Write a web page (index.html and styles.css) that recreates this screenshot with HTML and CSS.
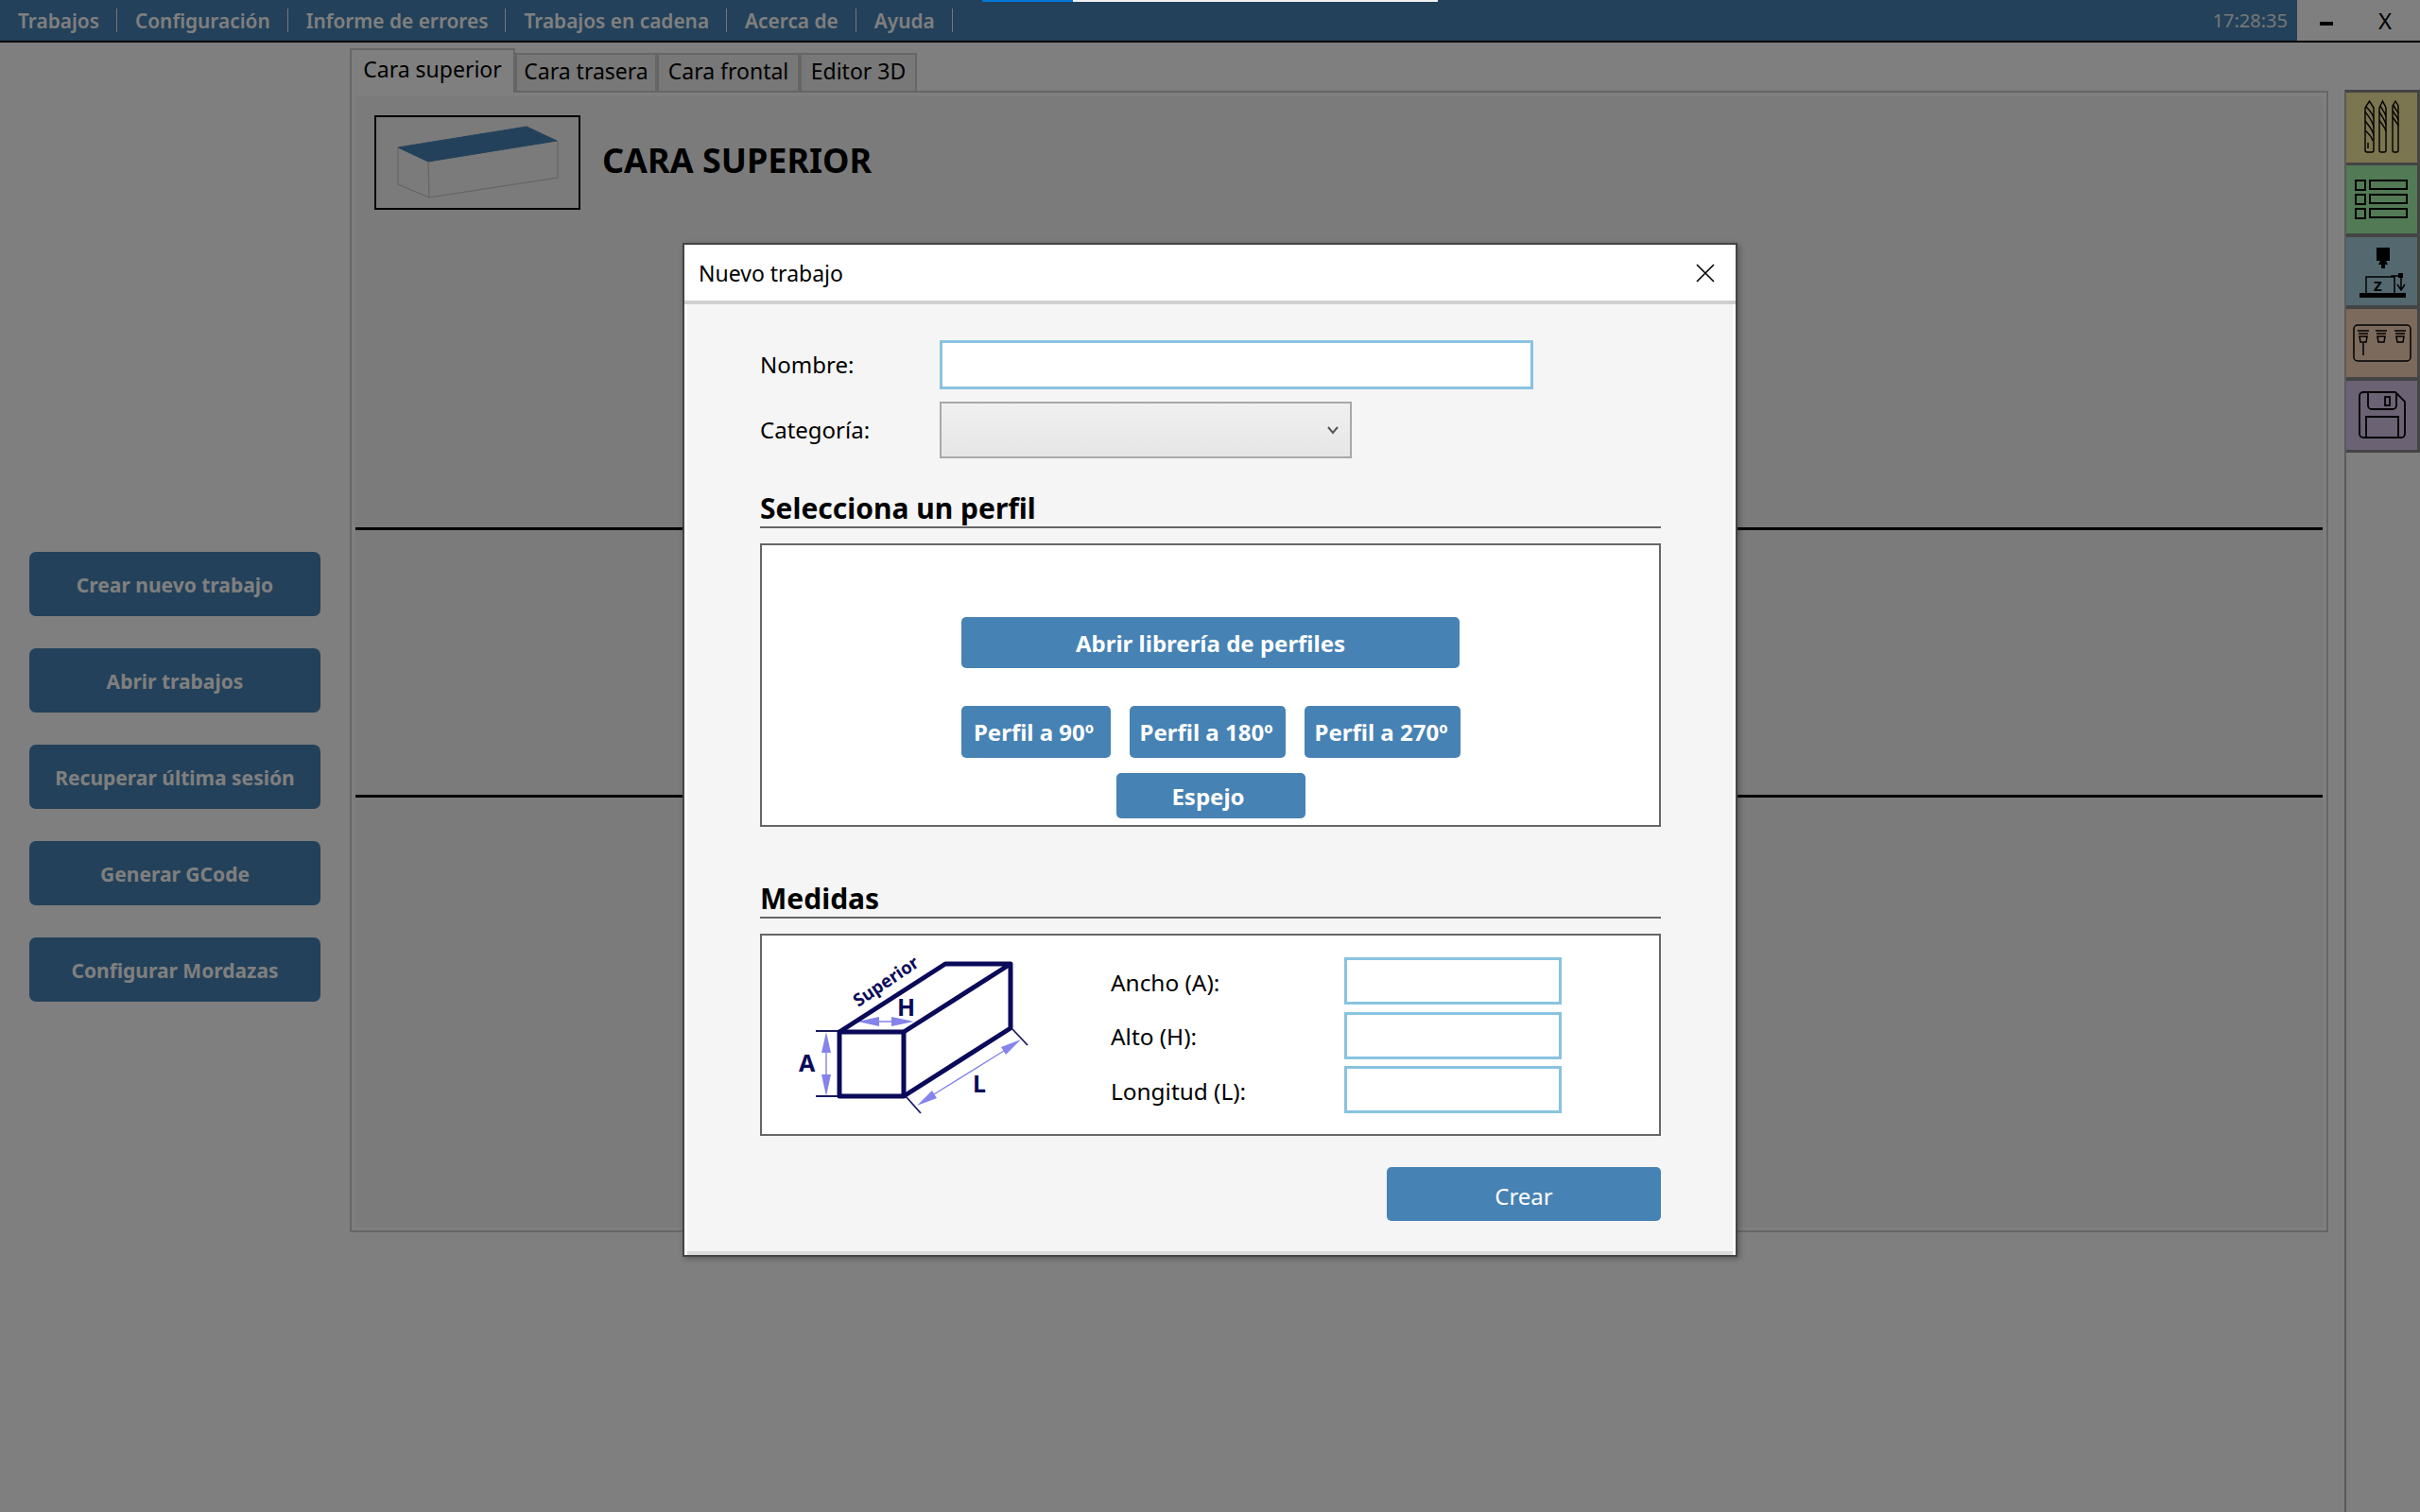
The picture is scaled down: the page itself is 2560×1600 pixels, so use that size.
FILE: index.html
```html
<!DOCTYPE html>
<html lang="es">
<head>
  <meta charset="UTF-8">
  <title>Nuevo trabajo</title>
  <link rel="stylesheet" href="styles.css">
</head>
<body>

<div class="app">
  <div class="topbar">
    <nav class="menu">
      <a>Trabajos</a>
      <a>Configuración</a>
      <a>Informe de errores</a>
      <a>Trabajos en cadena</a>
      <a>Acerca de</a>
      <a>Ayuda</a>
    </nav>
    <span class="clock">17:28:35</span>
    <div class="win-controls">
      <span class="win-min"></span>
      <span class="win-close">X</span>
    </div>
  </div>

  <div class="main">
    <div class="side">
      <button class="side-btn">Crear nuevo trabajo</button>
      <button class="side-btn">Abrir trabajos</button>
      <button class="side-btn">Recuperar última sesión</button>
      <button class="side-btn">Generar GCode</button>
      <button class="side-btn">Configurar Mordazas</button>
    </div>

    <div class="center">
      <div class="tabs">
        <div class="tab active">Cara superior</div>
        <div class="tab tab-1">Cara trasera</div>
        <div class="tab tab-2">Cara frontal</div>
        <div class="tab tab-3">Editor 3D</div>
      </div>
      <div class="panel">
        <div class="panel-inner">
          <div class="face-head">
            <div class="thumb">
              <svg width="214" height="96" viewBox="2 2 214 96">
                <path d="M25 34 L161 12 L193 27 L57 49 Z" fill="#4682b4" stroke="#4682b4"/>
                <path d="M25 34 V73 L58 87 L194 66 V27 M57 49 L58 87" fill="none" stroke="#c8c8c8" stroke-width="1.2"/>
              </svg>
            </div>
            <h2 class="face-title">CARA SUPERIOR</h2>
          </div>
          <div class="face-row"></div>
          <div class="face-row"></div>
        </div>
      </div>
    </div>

    <div class="rail">
      <button class="rail-btn tools">
        <svg width="75" height="74" viewBox="0 0 75 74" fill="none" stroke="#000" stroke-width="1.4">
          <path d="M20 16 L24.5 9 L29 16 V61 a2 2 0 0 1 -2 2 H22 a2 2 0 0 1 -2 -2 Z"/>
          <path d="M21 15 C25 19 28 22 29 27 M20 20 C23 25 28 29 29 37 M20 30 C23 34 28 39 29 45 M20 40 C23 43 27 46 28 51 M23 53 V59"/>
          <path d="M35 16 L38.5 9 L42 16 V61 a2 2 0 0 1 -2 2 H37 a2 2 0 0 1 -2 -2 Z"/>
          <path d="M36 14 C38 18 41 21 42 25 M35 20 C37 25 41 28 42 34 M35 29 C37 33 41 36 42 41"/>
          <path d="M49 14 L52 9 L55 14 V61 a2 2 0 0 1 -2 2 H51 a2 2 0 0 1 -2 -2 Z"/>
          <path d="M50 13 C51 17 54 19 55 22 M49 19 C51 23 54 25 55 29 M49 26 C51 29 54 32 55 35"/>
        </svg>
      </button>
      <button class="rail-btn list">
        <svg width="75" height="72" viewBox="0 0 75 72" fill="none" stroke="#000" stroke-width="2">
          <rect x="10" y="16" width="10" height="10"/><rect x="25" y="16" width="39" height="9"/>
          <rect x="10" y="31" width="10" height="10"/><rect x="25" y="31" width="39" height="9"/>
          <rect x="10" y="46" width="10" height="10"/><rect x="25" y="46" width="39" height="9"/>
        </svg>
      </button>
      <button class="rail-btn zero">
        <svg width="75" height="72" viewBox="0 0 75 72">
          <path d="M32 11 H46 V25 H42 L44 29 H41 V33 H37 V29 H34 L36 25 H32 Z"/>
          <rect x="14" y="59" width="49" height="5"/>
          <path d="M21 59 V42 H51 V59 M47 41 H58 M58 41 V56 M54 50 L58 56 L62 50" fill="none" stroke="#000" stroke-width="1.5"/>
          <rect x="55" y="38" width="5" height="5"/>
          <text x="29" y="57" class="icon-z">Z</text>
        </svg>
      </button>
      <button class="rail-btn chucks">
        <svg width="75" height="72" viewBox="0 0 75 72" fill="none" stroke="#000" stroke-width="1.5">
          <rect x="8" y="17" width="60" height="38" rx="4"/>
          <path d="M12 23 H24 M13 26 H23 M14 29 H22 L21 35 H15 Z M18 36 V49"/>
          <path d="M31 23 H43 M32 26 H42 M33 29 H41 L40 35 H34 Z"/>
          <path d="M51 23 H63 M52 26 H62 M53 29 H61 L60 35 H54 Z"/>
        </svg>
      </button>
      <button class="rail-btn save">
        <svg width="75" height="73" viewBox="0 0 75 73" fill="none" stroke="#000" stroke-width="1.8">
          <path d="M18 12 H52 L62 22 V56 a4 4 0 0 1 -4 4 H18 a4 4 0 0 1 -4 -4 V16 a4 4 0 0 1 4 -4 Z"/>
          <path d="M23 12 V26 a4 4 0 0 0 4 4 H49 a4 4 0 0 0 4 -4 V13"/>
          <rect x="41" y="17" width="5" height="9"/>
          <path d="M21 60 V38 H55 V60"/>
        </svg>
      </button>
    </div>
  </div>
</div>

<div class="overlay">
  <div class="modal">
    <div class="modal-head">
      <span class="modal-title">Nuevo trabajo</span>
      <svg class="modal-close" width="20" height="20" viewBox="0 0 20 20"><path d="M1 1 L19 19 M19 1 L1 19" stroke="#000" stroke-width="1.6"/></svg>
    </div>
    <div class="modal-body">
      <div class="form-row row-name">
        <label>Nombre:</label>
        <input class="field field-name" type="text">
      </div>
      <div class="form-row row-cat">
        <label>Categoría:</label>
        <div class="select">
          <svg width="12" height="10" viewBox="0 0 12 10"><path d="M1 2 L6 8 L11 2" fill="none" stroke="#555" stroke-width="2"/></svg>
        </div>
      </div>

      <h3 class="section-title">Selecciona un perfil</h3>
      <div class="box box-profile">
        <button class="blue-btn btn-library">Abrir librería de perfiles</button>
        <div class="angle-row">
          <button class="blue-btn btn-90">Perfil a 90º</button>
          <button class="blue-btn btn-180">Perfil a 180º</button>
          <button class="blue-btn btn-180">Perfil a 270º</button>
        </div>
        <button class="blue-btn btn-mirror">Espejo</button>
      </div>

      <h3 class="section-title title-sizes">Medidas</h3>
      <div class="box box-sizes">
        <svg class="diagram" width="290" height="190" viewBox="26 10 290 190">
          <g fill="none" stroke="#8484ea" stroke-width="1.4">
            <path d="M94 134 V157 M150 101 H163 M208 178 L282 132"/>
          </g>
          <g fill="#8484ea">
            <path d="M94 112 L99 134 H89 Z M94 180 L99 157 H89 Z"/>
            <path d="M127 101 L150 96 V106 Z M187 101 L163 96 V106 Z"/>
            <path d="M190 190 L211 182 L206 174 Z M300 120 L284 136 L279 128 Z"/>
          </g>
          <g fill="none" stroke="#1a1a5e" stroke-width="1.8">
            <path d="M83 111 H108 M83 180 H108 M178 180 L194 198 M291 109 L307 126"/>
          </g>
          <g fill="none" stroke="#0a0a5a" stroke-width="5" stroke-linejoin="round">
            <rect x="108" y="112" width="68" height="68"/>
            <path d="M108 112 L220 40 H289 L176 112 M289 40 V108 L176 180"/>
          </g>
          <g class="diagram-text">
            <text x="65" y="154" class="diagram-letter">A</text>
            <text x="169" y="95" class="diagram-letter">H</text>
            <text x="249" y="176" class="diagram-letter">L</text>
            <text class="diagram-super" transform="translate(128 86) rotate(-34)">Superior</text>
          </g>
        </svg>
        <div class="size-grid">
          <label>Ancho (A):</label><input class="field field-size" type="text">
          <label>Alto (H):</label><input class="field field-size" type="text">
          <label>Longitud (L):</label><input class="field field-size" type="text">
        </div>
      </div>

      <div class="modal-foot">
        <button class="blue-btn btn-create">Crear</button>
      </div>
    </div>
  </div>
</div>

<div class="progress"><div class="progress-fill"></div></div>

</body>
</html>
```

FILE: styles.css
```css
* {
  box-sizing: border-box;
}

html, body {
  margin: 0;
  height: 100%;
  overflow: hidden;
}

body {
  font-family: "Noto Sans", "Open Sans", sans-serif;
  color: #000;
  background: #fff;
}

button {
  font-family: inherit;
  border: none;
  cursor: pointer;
}

.app {
  height: 1600px;
  display: flex;
  flex-direction: column;
  background: #ffffff;
}

/* barra superior */
.topbar {
  height: 45px;
  flex: none;
  display: flex;
  align-items: stretch;
  background: #4682b4;
  border-bottom: 2px solid #000;
}

.menu {
  display: flex;
  align-items: flex-start;
  padding-top: 9px;
  flex: 1;
}

.menu a {
  height: 25px;
  line-height: 26px;
  padding: 0 18px 0 19px;
  border-right: 1px solid #eee;
  font-size: 20.85px;
  font-weight: 600;
  color: #fff;
  white-space: nowrap;
}

.clock {
  line-height: 43px;
  margin-right: 10px;
  font-size: 20px;
  color: #eee;
}

.win-controls {
  width: 130px;
  background: #fff;
  display: flex;
}

.win-min {
  width: 14px;
  height: 4px;
  margin: 23px 0 0 24px;
  background: #000;
}

.win-close {
  margin-left: 48px;
  font-size: 24px;
  line-height: 43px;
}

/* cuerpo */
.main {
  flex: 1;
  display: flex;
  min-height: 0;
}

.side {
  width: 370px;
  flex: none;
  padding: 539px 0 0 31px;
  display: flex;
  flex-direction: column;
  gap: 34px;
}

.side-btn {
  width: 308px;
  height: 68px;
  padding: 2px 0 0;
  border-radius: 7px;
  background: #4682b4;
  color: #fff;
  font-size: 21px;
  font-weight: 700;
}

.center {
  width: 2093px;
  flex: none;
  padding-top: 6px;
}

.tabs {
  display: flex;
  align-items: flex-end;
  height: 47px;
  margin-bottom: -2px;
  position: relative;
  z-index: 1;
}

.tab {
  height: 42px;
  line-height: 35px;
  border: 2px solid #ccc;
  background: #f0f0f0;
  font-size: 23px;
  text-align: center;
}

.tab.active {
  height: 47px;
  width: 175px;
  border-bottom: none;
  background: #fff;
  line-height: 41px;
}

.tab-1 { width: 150px; }
.tab-2 { width: 151px; }
.tab-3 { width: 124px; }

.panel {
  height: 1208px;
  padding: 4px;
  background: #fff;
  border: 2px solid #ccc;
}

.panel-inner {
  height: 100%;
  background: #f7f7f7;
}

.face-head {
  height: 456px;
  padding: 20px 0 0 20px;
  display: flex;
  align-items: flex-start;
}

.thumb {
  width: 218px;
  height: 100px;
  border: 2px solid #000;
}

.thumb svg {
  display: block;
}

.face-title {
  margin: 23px 0 0 23px;
  font-size: 36px;
  font-weight: 700;
}

.face-row {
  height: 283px;
  border-top: 3px solid #000;
}

/* barra derecha */
.rail {
  width: 80px;
  margin: 50px 0 0 17px;
  flex: none;
  background: #fff;
  border-left: 2px solid #b4b4b4;
  border-top: 3px solid #888;
}

.rail-btn {
  display: block;
  width: 78px;
  padding: 0;
  border: none;
  border-right: 3px solid #888;
  border-bottom: 4px solid #888;
}

.rail-btn svg {
  display: block;
}

.tools { height: 77px; border-bottom-width: 3px; background: #f6eaa0; }
.list { height: 76px; background: #a4f4aa; }
.zero { height: 76px; background: #a8d2de; }
.chucks { height: 76px; background: #f8d4b8; }
.save { height: 76px; border-bottom-width: 3px; background: #d6c4e8; }

.icon-z {
  font-size: 15px;
  font-weight: 700;
}

/* dialogo */
.overlay {
  position: absolute;
  top: 0;
  left: 0;
  z-index: 2;
  width: 2560px;
  height: 1600px;
  padding-bottom: 13px;
  display: flex;
  justify-content: center;
  align-items: center;
  background: rgba(0, 0, 0, 0.5);
}

.modal {
  width: 1116px;
  height: 1073px;
  border: 2px solid #444;
  background: #fff;
  box-shadow: 2px 2px 6px rgba(0, 0, 0, 0.3);
  display: flex;
  flex-direction: column;
}

.modal-head {
  height: 63px;
  flex: none;
  padding: 0 22px 0 15px;
  display: flex;
  justify-content: space-between;
  align-items: center;
  border-bottom: 4px solid #d0d0d0;
}

.modal-title {
  font-size: 23px;
}

.modal-body {
  flex: 1;
  padding: 38px 76px 0 77px;
  background: #f5f5f5;
  border: 3px solid #fff;
  border-top: none;
  border-bottom: none;
  box-shadow: inset 0 -4px 0 #dcdcdc;
}

.form-row {
  display: flex;
  align-items: center;
  font-size: 24px;
}

.form-row label {
  width: 190px;
  margin-top: -2px;
}

.row-cat {
  margin-top: 13px;
}

.field {
  display: block;
  background: #fff;
  border: 3px solid #89c3e0;
  outline: none;
  padding: 0;
}

.field-name {
  width: 628px;
  height: 52px;
}

.select {
  width: 436px;
  height: 60px;
  padding-right: 12px;
  display: flex;
  justify-content: flex-end;
  align-items: center;
  border: 2px solid #a8a8a8;
  background: linear-gradient(#f0f0f0, #e6e6e6);
}

.section-title {
  height: 34px;
  margin: 40px 0 0;
  border-bottom: 2px solid #666;
  font-size: 30px;
  font-weight: 700;
  line-height: 26px;
}

.title-sizes {
  margin-top: 63px;
}

.box {
  margin-top: 16px;
  background: #fff;
  border: 2px solid #666;
}

.box-profile {
  height: 300px;
  padding-top: 76px;
  display: flex;
  flex-direction: column;
  align-items: center;
}

.blue-btn {
  background: #4682b4;
  color: #fff;
  border-radius: 5px;
  font-size: 24px;
  font-weight: 700;
  padding: 0;
}

.btn-library {
  width: 527px;
  height: 54px;
}

.angle-row {
  display: flex;
  gap: 20px;
  margin-top: 40px;
}

.btn-90 {
  width: 158px;
  height: 55px;
  padding-right: 4px;
}

.btn-180 {
  width: 165px;
  height: 55px;
  padding-right: 2px;
}

.btn-mirror {
  width: 200px;
  height: 48px;
  margin-top: 16px;
  padding-right: 5px;
}

.box-sizes {
  height: 214px;
  display: flex;
  align-items: flex-start;
}

.diagram {
  flex: none;
}

.diagram-letter {
  font-size: 25px;
  font-weight: 700;
  fill: #0a0a5a;
}

.diagram-super {
  font-size: 18.6px;
  font-weight: 700;
  fill: #0a0a5a;
}

.size-grid {
  margin: 23px 0 0 79px;
  display: grid;
  grid-template-columns: 247px 230px;
  grid-auto-rows: 50px;
  row-gap: 7.5px;
  align-items: center;
  font-size: 24.4px;
}

.size-grid label {
  padding-top: 2px;
}

.field-size {
  width: 230px;
  height: 50px;
}

.modal-foot {
  margin-top: 33px;
  display: flex;
  justify-content: flex-end;
}

.btn-create {
  width: 290px;
  height: 57px;
  padding-top: 3px;
  font-weight: 400;
}

/* barra de progreso, por encima de la capa oscura */
.progress {
  position: absolute;
  top: 0;
  left: 1039px;
  z-index: 3;
  width: 482px;
  height: 2px;
  background: #f0f0f0;
}

.progress-fill {
  width: 96px;
  height: 2px;
  background: #0078d7;
}
```
